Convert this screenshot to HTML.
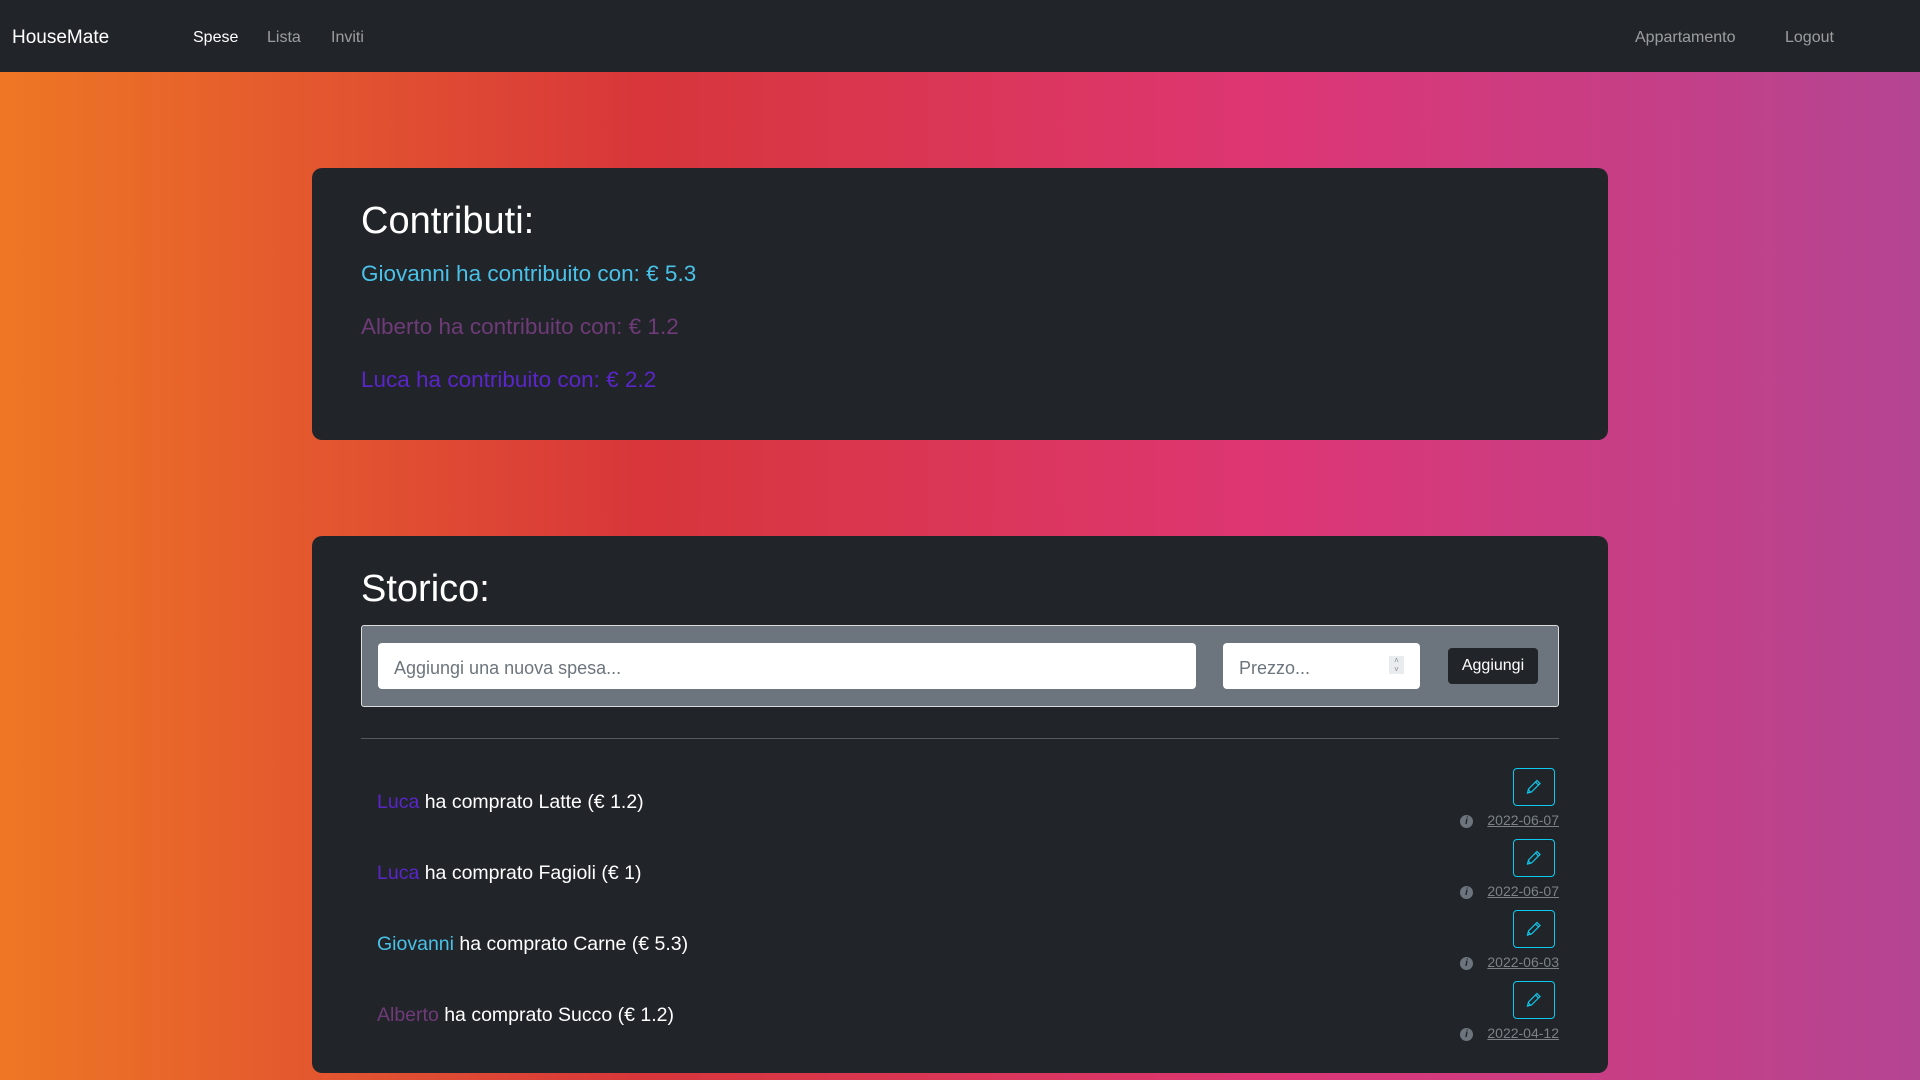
<!DOCTYPE html>
<html><head><meta charset="utf-8"><style>
*{box-sizing:border-box;margin:0;padding:0}
body{width:1920px;height:1080px;overflow:hidden;font-family:"Liberation Sans",sans-serif;background:linear-gradient(to right,#ee7724,#d8363a,#dd3675,#b44593);position:relative}
nav{position:absolute;left:0;top:0;width:1920px;height:72px;background:#212529}
nav span{position:absolute;top:29px;font-size:16px;color:rgba(255,255,255,.55)}
.card{position:absolute;left:312px;width:1296px;background:#212529;border-radius:10px}
h2{position:absolute;left:49px;color:#fff;font-weight:400;font-size:38px}
.c{position:absolute;left:49px;font-size:22.5px}
.form{position:absolute;left:49px;top:89px;width:1198px;height:82px;background:#6c757d;border:1px solid #ddd;border-radius:3px}
.in{position:absolute;background:#fff;border-radius:4px;height:46px;top:17px;color:#6c757d;font-size:18px;padding:15px 16px 0}
.btn{position:absolute;left:1086px;top:22px;width:90px;height:36px;background:#212529;border-radius:4px;color:#fff;font-size:16px;text-align:center;line-height:36px}
.row{position:absolute;left:65px;font-size:19.5px;color:#fff}
.ed{position:absolute;left:1201px;width:42px;height:38px;border:1.5px solid #0dcaf0;border-radius:4px}
.ed svg{position:absolute;left:12px;top:10px}
.dt{position:absolute;right:49px;font-size:14px;color:#7c8288;text-decoration:underline}
.ii{position:absolute;left:1148px;width:13px;height:13px;border-radius:50%;background:#6c757d;color:#212529;font-size:10px;font-weight:bold;text-align:center;line-height:13px;font-style:italic}
</style></head><body>
<nav>
<span style="left:12px;top:27px;font-size:19px;color:#fff">HouseMate</span>
<span style="left:193px;color:#fff">Spese</span>
<span style="left:267px">Lista</span>
<span style="left:331px">Inviti</span>
<span style="left:1635px">Appartamento</span>
<span style="left:1785px">Logout</span>
</nav>
<div class="card" style="top:168px;height:272px">
<h2 style="top:32px">Contributi:</h2>
<div class="c" style="top:93px;color:#4ac1e8">Giovanni ha contribuito con: € 5.3</div>
<div class="c" style="top:146px;color:#6f3a78">Alberto ha contribuito con: € 1.2</div>
<div class="c" style="top:199px;color:#5a25c9">Luca ha contribuito con: € 2.2</div>
</div>
<div class="card" style="top:536px;height:537px">
<h2 style="top:32px">Storico:</h2>
<div class="form">
<div class="in" style="left:16px;width:818px">Aggiungi una nuova spesa...</div>
<div class="in" style="left:861px;width:197px">Prezzo...<span style="position:absolute;right:16px;top:13px;width:15px;height:18px;background:#e9ecef;font-size:8px;line-height:9px;text-align:center;color:#888">˄<br>˅</span></div>
<div class="btn">Aggiungi</div>
</div>
<div style="position:absolute;left:49px;top:202px;width:1198px;height:1px;background:#555a60"></div>
<div class="row" style="top:255px"><span style="color:#5a25c9">Luca</span> ha comprato Latte (€ 1.2)</div>
<div class="row" style="top:326px"><span style="color:#5a25c9">Luca</span> ha comprato Fagioli (€ 1)</div>
<div class="row" style="top:397px"><span style="color:#4ac1e8">Giovanni</span> ha comprato Carne (€ 5.3)</div>
<div class="row" style="top:468px"><span style="color:#6f3a78">Alberto</span> ha comprato Succo (€ 1.2)</div>
<div class="ed" style="top:232px"><svg width="16" height="16" viewBox="0 0 16 16" fill="none" stroke="#0dcaf0" stroke-width="1.2"><path d="M11 1.5l3 3-8.5 8.5-4 1 1-4z M9.5 3l3 3 M2.5 11l2.5 2.5"/></svg></div>
<div class="ed" style="top:303px"><svg width="16" height="16" viewBox="0 0 16 16" fill="none" stroke="#0dcaf0" stroke-width="1.2"><path d="M11 1.5l3 3-8.5 8.5-4 1 1-4z M9.5 3l3 3 M2.5 11l2.5 2.5"/></svg></div>
<div class="ed" style="top:374px"><svg width="16" height="16" viewBox="0 0 16 16" fill="none" stroke="#0dcaf0" stroke-width="1.2"><path d="M11 1.5l3 3-8.5 8.5-4 1 1-4z M9.5 3l3 3 M2.5 11l2.5 2.5"/></svg></div>
<div class="ed" style="top:445px"><svg width="16" height="16" viewBox="0 0 16 16" fill="none" stroke="#0dcaf0" stroke-width="1.2"><path d="M11 1.5l3 3-8.5 8.5-4 1 1-4z M9.5 3l3 3 M2.5 11l2.5 2.5"/></svg></div>
<div class="ii" style="top:279px">i</div><div class="dt" style="top:276px">2022-06-07</div>
<div class="ii" style="top:350px">i</div><div class="dt" style="top:347px">2022-06-07</div>
<div class="ii" style="top:421px">i</div><div class="dt" style="top:418px">2022-06-03</div>
<div class="ii" style="top:492px">i</div><div class="dt" style="top:489px">2022-04-12</div>
</div>
</body></html>
